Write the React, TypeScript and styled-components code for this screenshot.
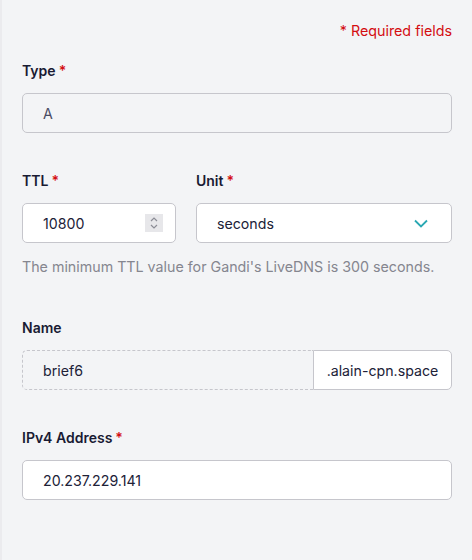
import React from "react";
import styled, { createGlobalStyle } from "styled-components";

const GlobalStyle = createGlobalStyle`
  html, body {
    margin: 0;
    padding: 0;
    background: #f3f4f6;
  }
  body {
    font-family: Inter, "Noto Sans", "Liberation Sans", sans-serif;
    font-size: 14px;
    color: #1d1e3a;
  }
`;

const Panel = styled.div`
  box-sizing: border-box;
  width: 472px;
  height: 560px;
  background: #f3f4f6;
  border-left: 2px solid #ebebee;
  padding: 20px 20px 0 20px;
  display: flex;
  flex-direction: column;
`;

const Required = styled.p`
  margin: 0;
  text-align: right;
  color: #d40d12;
  font-size: 14.3px;
  line-height: 22px;
`;

const Field = styled.div<{ $top?: number; $width?: number; $grow?: boolean }>`
  display: flex;
  flex-direction: column;
  margin-top: ${(p) => p.$top ?? 0}px;
  flex: ${(p) => (p.$width ? `0 0 ${p.$width}px` : p.$grow ? "1" : "none")};
`;

const Label = styled.label`
  font-weight: 600;
  font-size: 14px;
  line-height: 20px;
  color: #191a33;
  margin-bottom: 12px;
`;

const Star = styled.span`
  color: #d40d12;
  margin-left: 3px;
`;

const Box = styled.div<{ $disabled?: boolean }>`
  box-sizing: border-box;
  height: 40px;
  border: 1px solid #c6c6cc;
  border-radius: 5px;
  background: ${(p) => (p.$disabled ? "transparent" : "#ffffff")};
  display: flex;
  align-items: center;
  padding: 0 20px;
  font-size: 14.2px;
  color: ${(p) => (p.$disabled ? "#4a4b63" : "#202137")};
`;

const Row = styled.div<{ $top: number }>`
  display: flex;
  gap: 20px;
  margin-top: ${(p) => p.$top}px;
`;

const Spinner = styled.span`
  margin-left: auto;
  margin-right: -8px;
  width: 18px;
  height: 18px;
  background: #e7e7ea;
  display: flex;
  align-items: center;
  justify-content: center;
`;

const Chevron = styled.span`
  margin-left: auto;
  margin-right: 3px;
  display: flex;
`;

const Hint = styled.p`
  margin: 14px 0 0 0;
  color: #85868f;
  font-size: 14.25px;
  line-height: 20px;
`;

const Group = styled.div`
  display: flex;
  height: 40px;
`;

const Editable = styled.div`
  box-sizing: border-box;
  flex: 1;
  border: 1px dashed #c6c6cc;
  border-right: none;
  border-radius: 5px 0 0 5px;
  display: flex;
  align-items: center;
  padding: 0 20px;
  font-size: 14.2px;
  color: #202137;
`;

const Suffix = styled.div`
  box-sizing: border-box;
  width: 139px;
  background: #ffffff;
  border: 1px solid #c6c6cc;
  border-radius: 0 5px 5px 0;
  display: flex;
  align-items: center;
  justify-content: center;
  font-size: 14.2px;
  color: #202137;
`;

export default function App() {
  return (
    <>
      <GlobalStyle />
      <Panel>
        <Required>* Required fields</Required>

        <Field $top={19}>
          <Label>
            Type<Star>*</Star>
          </Label>
          <Box $disabled>A</Box>
        </Field>

        <Row $top={38}>
          <Field $width={154}>
            <Label>
              TTL<Star>*</Star>
            </Label>
            <Box>
              10800
              <Spinner>
                <svg width="10" height="14" viewBox="0 0 10 14" fill="none" stroke="#8c8d96" strokeWidth="1.2">
                  <path d="M2 5l3-3 3 3" />
                  <path d="M2 9l3 3 3-3" />
                </svg>
              </Spinner>
            </Box>
          </Field>
          <Field $grow>
            <Label>
              Unit<Star>*</Star>
            </Label>
            <Box>
              seconds
              <Chevron>
                <svg width="14" height="9" viewBox="0 0 14 9" fill="none" stroke="#2aa8b3" strokeWidth="1.8">
                  <path d="M1 1.5l6 6 6-6" />
                </svg>
              </Chevron>
            </Box>
          </Field>
        </Row>
        <Hint>The minimum TTL value for Gandi's LiveDNS is 300 seconds.</Hint>

        <Field $top={41}>
          <Label>Name</Label>
          <Group>
            <Editable>brief6</Editable>
            <Suffix>.alain-cpn.space</Suffix>
          </Group>
        </Field>

        <Field $top={38}>
          <Label>
            IPv4 Address<Star>*</Star>
          </Label>
          <Box>20.237.229.141</Box>
        </Field>
      </Panel>
    </>
  );
}
